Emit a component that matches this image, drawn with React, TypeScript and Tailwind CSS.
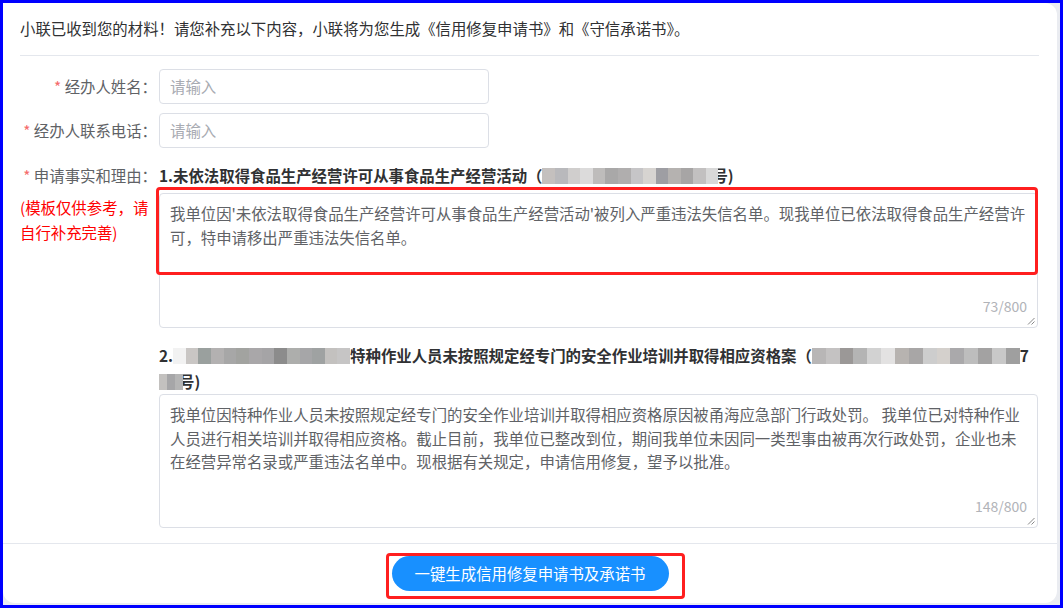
import React from "react";

const FONT = { fontFamily: '"Noto Sans CJK SC", "Noto Sans", sans-serif' };

function Mosaic({ w, cells }: { w: number; cells: string[] }) {
  return (
    <span
      className="relative z-10 inline-flex h-[16px] align-[-2px] overflow-hidden blur-[0.4px]"
      style={{ width: w }}
    >
      {cells.map((c, i) => (
        <span key={i} className="h-full flex-1" style={{ background: c }} />
      ))}
    </span>
  );
}

function Resize() {
  return (
    <svg className="absolute bottom-[2px] right-[2px]" width="8" height="8" viewBox="0 0 8 8">
      <line x1="7.5" y1="1" x2="1" y2="7.5" stroke="#7a7a7a" strokeWidth="0.9" />
      <line x1="7.5" y1="4.5" x2="4.5" y2="7.5" stroke="#7a7a7a" strokeWidth="0.9" />
    </svg>
  );
}

export default function App() {
  return (
    <div
      className="box-border flex h-[608px] w-[1063px] flex-col border-[3px] border-[#0000ff] bg-[#eaecf1]"
      style={FONT}
    >
      <div className="mr-[3px] mb-[2px] flex h-[600px] flex-col rounded-tr-[12px] rounded-b-[12px] bg-white text-[15.4px]">
        {/* header */}
        <div className="ml-[17px] mr-[18px] flex h-[53px] items-center border-b border-[#e4e7ed] pb-[1px] text-[#303133]">
          小联已收到您的材料！请您补充以下内容，小联将为您生成《信用修复申请书》和《守信承诺书》。
        </div>

        {/* form */}
        <div className="flex flex-1 flex-col pl-[17px] pr-[19px] pt-[13px] pb-[15px]">
          <div className="flex h-[35px] items-center gap-[2px]">
            <div className="w-[137px] whitespace-nowrap text-right text-[#606266]">
              <span className="text-[#f56c6c]">*</span> 经办人姓名：
            </div>
            <div className="flex h-[35px] w-[330px] items-center rounded-[4px] border border-[#dcdfe6] px-[10px] text-[#a8abb2]">
              请输入
            </div>
          </div>
          <div className="mt-[9px] flex h-[35px] items-center gap-[2px]">
            <div className="w-[137px] whitespace-nowrap text-right text-[#606266]">
              <span className="text-[#f56c6c]">*</span> 经办人联系电话：
            </div>
            <div className="flex h-[35px] w-[330px] items-center rounded-[4px] border border-[#dcdfe6] px-[10px] text-[#a8abb2]">
              请输入
            </div>
          </div>

          <div className="mt-[14px] flex gap-[7px]">
            <div className="w-[132px] shrink-0">
              <div className="-mr-[5px] whitespace-nowrap text-right leading-[26px] text-[#606266]">
                <span className="text-[#f56c6c]">*</span> 申请事实和理由：
              </div>
              <div className="mt-[7px] whitespace-nowrap leading-[25px] text-[#ff0000]">
                (模板仅供参考，请
                <br />
                自行补充完善)
              </div>
            </div>

            <div className="flex w-[879px] flex-col">
              <div className="whitespace-nowrap font-bold leading-[26px] text-[#303133]">
                1.未依法取得食品生产经营许可从事食品生产经营活动（
                <Mosaic
                  w={176}
                  cells={["#c4c0be", "#b9b9bc", "#d0cecd", "#dcdbdb", "#bebcbb", "#a9a8a8", "#b0aeae", "#c6c5c7", "#d7d4d1", "#9e9ea3", "#b5b2b0", "#a7a5a5", "#c2c0c0", "#d8d8d8"]}
                />
                <span className="-ml-[6px]">号)</span>
              </div>

              <div className="relative mt-[5px]">
                <div className="relative h-[135px] rounded-[4px] border border-[#dcdfe6] px-[10px] pt-[8px] leading-[23.5px] text-[#606266]">
                  <div className="whitespace-nowrap">
                    我单位因'未依法取得食品生产经营许可从事食品生产经营活动'被列入严重违法失信名单。现我单位已依法取得食品生产经营许
                  </div>
                  <div className="whitespace-nowrap">可，特申请移出严重违法失信名单。</div>
                  <div className="absolute bottom-[12px] right-[10px] text-[14px] leading-[18px] text-[#b1b3b8]">
                    73/800
                  </div>
                  <Resize />
                </div>
                <div className="pointer-events-none absolute -left-[3px] -top-[6px] right-0 h-[88px] rounded-[4px] border-[3px] border-[#ff1f1f]" />
              </div>

              <div className="mt-[14px] font-bold leading-[26px] text-[#303133]">
                <div className="whitespace-nowrap">
                  2.
                  <Mosaic
                    w={177}
                    cells={["#f2f2f2", "#c9c6c4", "#9aa09e", "#b3b1b1", "#a7a7a7", "#a2a3a0", "#a9a7a9", "#a5a4a6", "#8c8c8c", "#adaeac", "#a6a6a8", "#9fa2a2", "#c3c1bf", "#c6c5c5"]}
                  />
                  特种作业人员未按照规定经专门的安全作业培训并取得相应资格案（
                  <Mosaic
                    w={208}
                    cells={["#b8b6b6", "#c4c2c2", "#9b9897", "#b4b4b4", "#d2d2d2", "#e3e2e2", "#b7b3b0", "#a8a6a6", "#cdcdcd", "#d4d0cc", "#aaa9ab", "#bdbdbd", "#a3a2a2", "#c8c8c8", "#9f9f9f"]}
                  />
                  7
                </div>
                <div className="whitespace-nowrap">
                  <Mosaic w={24} cells={["#c3c1bf", "#a6a6a8", "#b5b5b5"]} />
                  <span className="-ml-[4px]">号)</span>
                </div>
              </div>

              <div className="relative h-[134px] rounded-[4px] border border-[#dcdfe6] px-[10px] pt-[8px] leading-[23.5px] text-[#606266]">
                <div className="whitespace-nowrap">
                  我单位因特种作业人员未按照规定经专门的安全作业培训并取得相应资格原因被甬海应急部门行政处罚。 我单位已对特种作业
                </div>
                <div className="whitespace-nowrap">
                  人员进行相关培训并取得相应资格。截止目前，我单位已整改到位，期间我单位未因同一类型事由被再次行政处罚，企业也未
                </div>
                <div className="whitespace-nowrap">
                  在经营异常名录或严重违法名单中。现根据有关规定，申请信用修复，望予以批准。
                </div>
                <div className="absolute bottom-[12px] right-[10px] text-[14px] leading-[18px] text-[#b1b3b8]">
                  148/800
                </div>
                <Resize />
              </div>
            </div>
          </div>
        </div>

        {/* footer */}
        <div className="flex h-[60px] items-center justify-center border-t border-[#e4e7ed]">
          <div className="relative">
            <button className="flex h-[35px] w-[277px] items-center justify-center rounded-full bg-[#1890ff] text-[15.4px] text-white">
              一键生成信用修复申请书及承诺书
            </button>
            <div className="pointer-events-none absolute -left-[6px] -right-[16px] -top-[3px] -bottom-[8px] rounded-[4px] border-[3px] border-[#ff1f1f]" />
          </div>
        </div>
      </div>
    </div>
  );
}
